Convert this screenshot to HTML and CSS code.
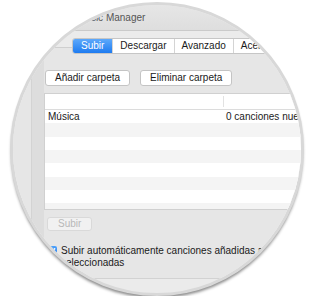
FILE: index.html
```html
<!DOCTYPE html>
<html lang="es">
	<head>
		<meta charset="UTF-8" />
		<meta name="viewport" content="width=device-width, initial-scale=1.0" />
		<title>Music Manager</title>
		<link rel="stylesheet" href="styles.css">
	</head>
	<body>
		<div class="lens">
			<div class="window">
				<div class="titlebar">Music Manager</div>
				<div class="content">
					<div class="tabs">
						<span class="tab active">Subir</span>
						<span class="tab">Descargar</span>
						<span class="tab">Avanzado</span>
						<span class="tab">Acerca de</span>
					</div>
					<div class="box">
						<div class="strip"></div>
						<div class="pane">
							<div class="actions">
								<button class="btn">Añadir carpeta</button>
								<button class="btn">Eliminar carpeta</button>
							</div>
							<div class="table">
								<div class="table-head">
									<div class="col-name"></div>
									<div class="col-info"></div>
								</div>
								<div class="table-body">
									<div class="row">
										<div class="col-name">Música</div>
										<div class="col-info">0 canciones nuevas</div>
									</div>
									<div class="row"></div>
									<div class="row"></div>
									<div class="row"></div>
									<div class="row"></div>
									<div class="row"></div>
									<div class="row"></div>
									<div class="row"></div>
								</div>
							</div>
							<button class="btn btn-disabled" disabled>Subir</button>
							<label class="check">
								<span class="checkbox">
									<svg width="11" height="11" viewBox="0 0 11 11">
										<path d="M2.5 5.6 L4.6 7.8 L8.6 2.8" fill="none" stroke="#fff" stroke-width="1.6" stroke-linecap="round" stroke-linejoin="round" />
									</svg>
								</span>
								<span class="check-text">Subir automáticamente canciones añadidas a las carpetas<br>seleccionadas</span>
							</label>
						</div>
					</div>
				</div>
			</div>
		</div>
	</body>
</html>
```

FILE: styles.css
```css
body {
	margin: 0;
	padding: 2px 0 0 10px;
	background-color: white;
	font-family: "Liberation Sans", Arial, sans-serif;
	font-size: 10px;
	color: #1a1a1a;
}
.lens {
	width: 288px;
	height: 288px;
	border: 3px solid #d8d8d8;
	border-radius: 50%;
	overflow: hidden;
	box-shadow: 0 3px 3px -1px rgba(0, 0, 0, 0.45);
	background-color: #ebebeb;
}
.window {
	width: 420px;
}
.titlebar {
	height: 25px;
	line-height: 25px;
	padding-left: 64px;
	background: linear-gradient(#e6e6e6, #dedede);
	border-bottom: 1px solid #cacaca;
	color: #555;
	white-space: nowrap;
}
.content {
	background-color: #ebebeb;
	padding-top: 7px;
}
.tabs {
	display: flex;
	margin-left: 59px;
	margin-bottom: -7px;
	position: relative;
	z-index: 1;
	width: max-content;
	border: 1px solid #c6c6c6;
	border-radius: 3px;
	background-color: white;
	height: 14px;
}
.tab {
	padding: 0 7px;
	line-height: 14px;
	border-left: 1px solid #d4d4d4;
}
.tab:first-child {
	border-left: none;
}
.tab.active {
	background: linear-gradient(#5ea9fb, #1e7bf0);
	color: white;
	padding: 0 8px;
	border-radius: 2px 0 0 2px;
}
.box {
	display: flex;
	background-color: #e6e6e6;
	border-top: 1px solid #cfcfcf;
	border-bottom: 1px solid #d2d2d2;
}
.strip {
	margin-left: 18px;
	width: 12px;
	background-color: #dddddd;
	border-left: 1px solid #d3d3d3;
}
.pane {
	flex: 1;
	padding-bottom: 9px;
}
.actions {
	display: flex;
	gap: 10px;
	margin: 22px 0 7px 1px;
}
.btn {
	font-family: inherit;
	font-size: 10px;
	color: #1a1a1a;
	height: 16px;
	padding: 0 9px;
	background-color: white;
	border: 1px solid #c4c4c4;
	border-radius: 3px;
	line-height: 14px;
}
.table {
	background-color: white;
	border: 1px solid #d0d0d0;
}
.table-head {
	display: flex;
	height: 15px;
	border-bottom: 1px solid #dcdcdc;
	align-items: center;
}
.table-head .col-name {
	height: 11px;
	border-right: 1px solid #e2e2e2;
}
.table-body {
	height: 99px;
	overflow: hidden;
}
.row {
	display: flex;
	height: 13.33px;
	line-height: 13px;
}
.row:nth-child(even) {
	background-color: #f4f4f4;
}
.col-name {
	width: 175px;
	padding-left: 3px;
	white-space: nowrap;
}
.col-info {
	padding-left: 3px;
	white-space: nowrap;
}
.btn-disabled {
	display: block;
	margin: 7px 0 0 3px;
	height: 14px;
	line-height: 12px;
	padding: 0 10px;
	color: #b8b8b8;
	background-color: #f1f1f1;
	border-color: #d9d9d9;
}
.check {
	display: flex;
	gap: 4px;
	margin: 14px 0 0 2px;
}
.checkbox {
	width: 11px;
	height: 11px;
	margin-top: 1px;
	border-radius: 2px;
	background: linear-gradient(#4fa2fa, #2079ee);
	flex-shrink: 0;
}
.checkbox svg {
	display: block;
}
.check-text {
	line-height: 12px;
	white-space: nowrap;
}
```
